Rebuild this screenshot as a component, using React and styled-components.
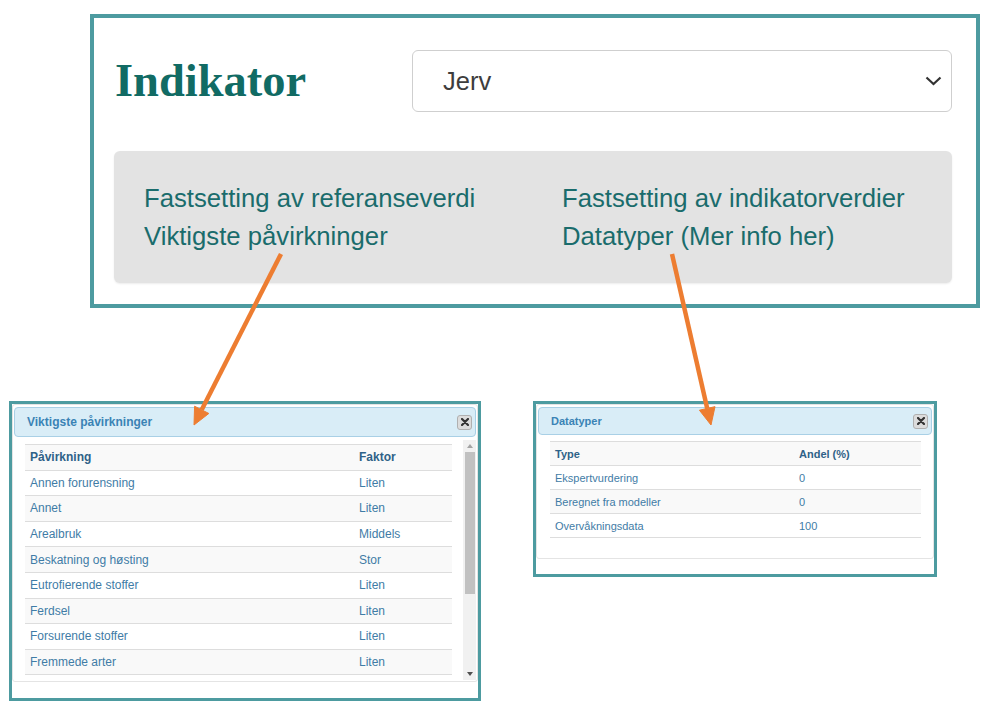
import React from "react";
import styled, { createGlobalStyle } from "styled-components";

const teal = "#4d9ba0";

const GlobalStyle = createGlobalStyle`
  html, body {
    margin: 0;
    padding: 0;
    background: #fff;
  }

  body {
    font-family: "Liberation Sans", Arial, sans-serif;
  }
`;

const Page = styled.div`
  position: relative;
  width: 998px;
  height: 720px;
  overflow: hidden;
  padding-top: 14px;
  box-sizing: border-box;
`;

const MainPanel = styled.section`
  box-sizing: border-box;
  width: 890px;
  height: 294px;
  margin-left: 90px;
  border: 4px solid ${teal};
  padding: 32px 24px 0 20px;
`;

const HeaderRow = styled.div`
  display: grid;
  grid-template-columns: 298px 1fr;
  align-items: center;
  height: 62px;
`;

const Heading = styled.h1`
  margin: 0 0 0 1px;
  font-family: "Liberation Serif", "Times New Roman", serif;
  font-weight: 700;
  font-size: 46.5px;
  line-height: 1;
  color: #116b64;
`;

const Select = styled.div`
  box-sizing: border-box;
  height: 62px;
  display: flex;
  align-items: center;
  justify-content: space-between;
  padding: 0 9px 0 30px;
  border: 1px solid #cfcfcf;
  border-radius: 6px;
  background: #fff;
  font-size: 25.5px;
  color: #3d3d3d;
`;

const InfoBox = styled.div`
  box-sizing: border-box;
  height: 132px;
  margin-top: 39px;
  padding: 28px 0 0 30px;
  display: grid;
  grid-template-columns: 418px 1fr;
  background: #e3e3e3;
  border-radius: 6px;
  box-shadow: 0 1px 2px rgba(0, 0, 0, 0.08);
`;

const LinkColumn = styled.div`
  display: flex;
  flex-direction: column;
`;

const InfoLink = styled.a`
  font-size: 25.7px;
  line-height: 38px;
  color: #1a6c6c;
  text-decoration: none;
  white-space: nowrap;
`;

const PopupRow = styled.div`
  display: flex;
  align-items: flex-start;
  gap: 52px;
  margin-top: 93px;
  padding-left: 9px;
`;

const PopupFrame = styled.div`
  box-sizing: border-box;
  width: ${(p) => p.$w}px;
  height: ${(p) => p.$h}px;
  border: 3px solid ${teal};
  background: #fff;
`;

const Dialog = styled.div`
  padding: 2px 1px 1px;
  border: 1px solid #e4e4e4;
  border-radius: 3px;
  font-size: ${(p) => p.$size}px;
`;

const TitleBar = styled.div`
  box-sizing: border-box;
  height: ${(p) => p.$h}px;
  display: flex;
  align-items: center;
  justify-content: space-between;
  padding: 0 3px 0 12px;
  background: #d9edf7;
  border: 1px solid #a9d0e6;
  border-radius: 4px;
  font-weight: 700;
  color: #3a83b5;
`;

const CloseButton = styled.button`
  box-sizing: border-box;
  width: 15px;
  height: 15px;
  padding: 0;
  display: flex;
  align-items: center;
  justify-content: center;
  background: #dcdcdc;
  border: 1px solid #b0b0b0;
  border-radius: 3px;
`;

const ScrollBody = styled.div`
  display: flex;
  height: 240px;
  margin-top: 3px;
`;

const Viewport = styled.div`
  flex: 1;
  overflow: hidden;
  padding: 4px 11px 0 11px;
`;

const Scrollbar = styled.div`
  width: 13px;
  display: flex;
  flex-direction: column;
  background: #f1f1f1;
`;

const ScrollArrow = styled.div`
  height: 12px;
  display: flex;
  align-items: center;
  justify-content: center;

  &::before {
    content: "";
    border-left: 3.5px solid transparent;
    border-right: 3.5px solid transparent;
    ${(p) =>
      p.$down
        ? `border-top: 4px solid #505050;`
        : `border-bottom: 4px solid #a3a3a3;`}
  }
`;

const ScrollTrack = styled.div`
  flex: 1;
`;

const Thumb = styled.div`
  height: 142px;
  margin: 0 1px 0 2px;
  background: #c1c1c1;
`;

const StaticBody = styled.div`
  padding: 6px 11px 19px 12px;
`;

const Table = styled.table`
  width: 100%;
  border-collapse: collapse;
  table-layout: fixed;

  th,
  td {
    text-align: left;
    padding: 0 5px;
    height: ${(p) => p.$row}px;
    border-top: 1px solid #dddddd;
    white-space: nowrap;
  }

  th {
    color: #2f6288;
    font-weight: 700;
  }

  td {
    color: #3f7ca6;
  }

  thead tr,
  tbody tr:nth-child(even) {
    background: #f9f9f9;
  }

  tbody tr:last-child td {
    border-bottom: 1px solid #dddddd;
  }
`;

const Col = styled.col`
  width: ${(p) => p.$w}px;
`;

const ArrowLayer = styled.svg`
  position: absolute;
  left: 0;
  top: 0;
  pointer-events: none;
`;

const Chevron = () => (
  <svg width="17" height="10" viewBox="0 0 17 10">
    <path d="M1.5 1.5 L8.5 8 L15.5 1.5" fill="none" stroke="#333" strokeWidth="2.2" />
  </svg>
);

const CloseIcon = () => (
  <svg width="8" height="8" viewBox="0 0 8 8">
    <path d="M1 1 L7 7 M7 1 L1 7" stroke="#333" strokeWidth="2.2" strokeLinecap="round" />
  </svg>
);

const pressures = [
  ["Annen forurensning", "Liten"],
  ["Annet", "Liten"],
  ["Arealbruk", "Middels"],
  ["Beskatning og høsting", "Stor"],
  ["Eutrofierende stoffer", "Liten"],
  ["Ferdsel", "Liten"],
  ["Forsurende stoffer", "Liten"],
  ["Fremmede arter", "Liten"],
];

const dataTypes = [
  ["Ekspertvurdering", "0"],
  ["Beregnet fra modeller", "0"],
  ["Overvåkningsdata", "100"],
];

const arrows = [
  { from: [281, 254], to: [194, 425] },
  { from: [672, 254], to: [711, 425] },
];

const arrowShape = ({ from, to }, len = 17, half = 8) => {
  const dx = to[0] - from[0];
  const dy = to[1] - from[1];
  const d = Math.hypot(dx, dy);
  const ux = dx / d;
  const uy = dy / d;
  const bx = to[0] - ux * len;
  const by = to[1] - uy * len;
  return {
    bx,
    by,
    points: `${to[0]},${to[1]} ${bx - uy * half},${by + ux * half} ${bx + uy * half},${by - ux * half}`,
  };
};

const Popup = ({ title, width, height, size, barHeight, children }) => (
  <PopupFrame $w={width} $h={height}>
    <Dialog $size={size}>
      <TitleBar $h={barHeight}>
        <span>{title}</span>
        <CloseButton aria-label="Lukk">
          <CloseIcon />
        </CloseButton>
      </TitleBar>
      {children}
    </Dialog>
  </PopupFrame>
);

export default function App() {
  return (
    <Page>
      <GlobalStyle />
      <MainPanel>
        <HeaderRow>
          <Heading>Indikator</Heading>
          <Select>
            <span>Jerv</span>
            <Chevron />
          </Select>
        </HeaderRow>
        <InfoBox>
          <LinkColumn>
            <InfoLink href="#">Fastsetting av referanseverdi</InfoLink>
            <InfoLink href="#">Viktigste påvirkninger</InfoLink>
          </LinkColumn>
          <LinkColumn>
            <InfoLink href="#">Fastsetting av indikatorverdier</InfoLink>
            <InfoLink href="#">Datatyper (Mer info her)</InfoLink>
          </LinkColumn>
        </InfoBox>
      </MainPanel>

      <PopupRow>
        <Popup title="Viktigste påvirkninger" width={472} height={300} size={12} barHeight={30}>
          <ScrollBody>
            <Viewport>
              <Table $row={24.6}>
                <colgroup>
                  <Col $w={329} />
                  <Col />
                </colgroup>
                <thead>
                  <tr>
                    <th>Påvirkning</th>
                    <th>Faktor</th>
                  </tr>
                </thead>
                <tbody>
                  {pressures.map(([name, factor]) => (
                    <tr key={name}>
                      <td>{name}</td>
                      <td>{factor}</td>
                    </tr>
                  ))}
                </tbody>
              </Table>
            </Viewport>
            <Scrollbar>
              <ScrollArrow />
              <ScrollTrack>
                <Thumb />
              </ScrollTrack>
              <ScrollArrow $down />
            </Scrollbar>
          </ScrollBody>
        </Popup>

        <Popup title="Datatyper" width={404} height={176} size={11} barHeight={28}>
          <StaticBody>
            <Table $row={23}>
              <colgroup>
                <Col $w={244} />
                <Col />
              </colgroup>
              <thead>
                <tr>
                  <th>Type</th>
                  <th>Andel (%)</th>
                </tr>
              </thead>
              <tbody>
                {dataTypes.map(([type, share]) => (
                  <tr key={type}>
                    <td>{type}</td>
                    <td>{share}</td>
                  </tr>
                ))}
              </tbody>
            </Table>
          </StaticBody>
        </Popup>
      </PopupRow>

      <ArrowLayer width="998" height="720" viewBox="0 0 998 720">
        {arrows.map((a, i) => {
          const { bx, by, points } = arrowShape(a);
          return (
            <g key={i} fill="#ed7d31" stroke="#ed7d31">
              <line x1={a.from[0]} y1={a.from[1]} x2={bx} y2={by} strokeWidth="4.5" />
              <polygon points={points} strokeWidth="1" strokeLinejoin="round" />
            </g>
          );
        })}
      </ArrowLayer>
    </Page>
  );
}
